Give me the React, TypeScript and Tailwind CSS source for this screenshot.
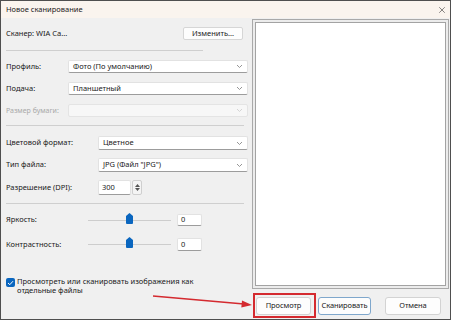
import { X } from 'lucide-react';

const font = { fontFamily: '"Noto Sans", "Open Sans", sans-serif' };

function Chevron({ light = false }: { light?: boolean }) {
  return (
    <svg width="7" height="5" viewBox="0 0 7 5" className="shrink-0">
      <path d="M1 1 L3.5 3.5 L6 1" fill="none" stroke={light ? '#cfcfcf' : '#8a8a8a'} strokeWidth="0.9" />
    </svg>
  );
}

function Select({ value, disabled = false, h = 'h-[13px]' }: { value?: string; disabled?: boolean; h?: string }) {
  return (
    <div
      className={`flex flex-1 items-center justify-between rounded-[2px] border pl-[4px] pr-[4px] ${h} ${
        disabled ? 'border-[#e4e4e4] bg-[#f7f7f7]' : 'border-[#e2e2e2] border-b-[#9c9c9c] bg-white'
      }`}
    >
      <span className="text-[7.5px] leading-none text-[#1a1a1a]">{value}</span>
      <Chevron light={disabled} />
    </div>
  );
}

function Row({ label, children, labelW, className }: { label: string; children: React.ReactNode; labelW: string; className: string }) {
  return (
    <div className={`flex items-center ${className}`}>
      <span className={`${labelW} shrink-0 text-[7.5px] leading-none text-[#1a1a1a]`}>{label}</span>
      {children}
    </div>
  );
}

function Slider({ label, className }: { label: string; className: string }) {
  return (
    <div className={`flex items-center ${className}`}>
      <span className="w-[82px] shrink-0 text-[7.5px] leading-none text-[#1a1a1a]">{label}</span>
      <div className="relative flex h-full w-[83px] items-center">
        <div className="h-px w-full bg-[#cdcdcd]" />
        <svg width="7" height="11" viewBox="0 0 7 11" className="absolute left-[38px] top-[-1px]">
          <path d="M0 3 L3.5 0 L7 3 V10 Q7 11 6 11 H1 Q0 11 0 10 Z" fill="#0a66bf" />
        </svg>
      </div>
      <div className="ml-[6px] flex h-full w-[25px] items-center rounded-[2px] border border-[#e2e2e2] border-b-[#9c9c9c] bg-white pl-[3px] text-[7.5px] leading-none text-[#1a1a1a]">
        0
      </div>
    </div>
  );
}

function Btn({ label, accent = false }: { label: string; accent?: boolean }) {
  return (
    <div
      className={`flex h-[18px] items-center justify-center rounded-[3px] border bg-[#fdfdfd] text-[7.5px] leading-none tracking-[-0.1px] text-[#1a1a1a] ${
        accent ? 'border-[#7fa7cc]' : 'border-[#d3d3d3]'
      }`}
    >
      {label}
    </div>
  );
}

export default function App() {
  return (
    <div className="relative flex h-[320px] w-[451px] flex-col overflow-hidden border border-[#4f4f4f] bg-[#f0f0f0]" style={font}>
      <div className="flex h-[17px] shrink-0 items-center justify-between bg-[#faf4ee] pl-[5px] pr-[3px]">
        <span className="text-[7.5px] leading-none text-[#1a1a1a]">Новое сканирование</span>
        <X size={10} strokeWidth={1.4} color="#333" />
      </div>

      <div className="flex flex-1">
        <div className="flex w-[250px] shrink-0 flex-col pl-[5px] pr-[3px]">
          <div className="mt-[9px] flex h-[13px] items-center justify-between">
            <span className="text-[7.5px] leading-none text-[#1a1a1a]">Сканер: WIA Ca...</span>
            <div className="mr-[5px] flex h-[13px] w-[60px] items-center justify-center rounded-[2px] border border-[#d6d6d6] bg-[#fdfdfd] text-[7.5px] leading-none text-[#1a1a1a]">
              Изменить...
            </div>
          </div>
          <div className="mt-[10px] h-px w-[197px] bg-[#cfcfcf]" />

          <Row label="Профиль:" labelW="w-[62px]" className="mt-[9px] h-[13px]">
            <Select value="Фото (По умолчанию)" />
          </Row>
          <Row label="Подача:" labelW="w-[62px]" className="mt-[9px] h-[13px]">
            <Select value="Планшетный" />
          </Row>
          <div className="mt-[9px] flex h-[13px] items-center">
            <span className="w-[62px] shrink-0 text-[7px] leading-none text-[#a8a8a8]">Размер бумаги:</span>
            <Select disabled />
          </div>
          <div className="mt-[8px] h-px w-[238px] bg-[#cfcfcf]" />

          <Row label="Цветовой формат:" labelW="w-[92px]" className="mt-[10px] h-[14px]">
            <Select value="Цветное" h="h-[14px]" />
          </Row>
          <Row label="Тип файла:" labelW="w-[92px]" className="mt-[8px] h-[14px]">
            <Select value='JPG (Файл "JPG")' h="h-[14px]" />
          </Row>
          <Row label="Разрешение (DPI):" labelW="w-[92px]" className="mt-[8px] h-[15px]">
            <div className="flex h-full w-[33px] items-center rounded-[2px] border border-[#e2e2e2] border-b-[#9c9c9c] bg-white pl-[3px] text-[7.5px] leading-none text-[#1a1a1a]">
              300
            </div>
            <div className="ml-px flex h-full w-[10px] flex-col items-center justify-center gap-px rounded-[2px] border border-[#cfcfcf] bg-[#f4f4f4]">
              <svg width="5" height="3" viewBox="0 0 5 3"><path d="M0 3 L2.5 0 L5 3 Z" fill="#555" /></svg>
              <svg width="5" height="3" viewBox="0 0 5 3"><path d="M0 0 L2.5 3 L5 0 Z" fill="#555" /></svg>
            </div>
          </Row>
          <div className="mt-[8px] h-px w-[238px] bg-[#cfcfcf]" />

          <Slider label="Яркость:" className="mt-[10px] h-[12px]" />
          <Slider label="Контрастность:" className="mt-[12px] h-[13px]" />

          <div className="mt-[26px] flex items-start gap-[2px]">
            <div className="mt-[1px] flex h-[9px] w-[9px] shrink-0 items-center justify-center rounded-[2px] bg-[#0a66bf]">
              <svg width="7" height="6" viewBox="0 0 7 6">
                <path d="M1 3 L2.8 4.7 L6 1.2" fill="none" stroke="white" strokeWidth="1" />
              </svg>
            </div>
            <span className="w-[190px] text-[7.5px] leading-[9px] text-[#1a1a1a]">
              Просмотреть или сканировать изображения как
              <br />
              отдельные файлы
            </span>
          </div>
        </div>

        <div className="flex flex-1 flex-col pr-[1px]">
          <div className="ml-[1px] mt-px h-[270px] border border-[#a9a9a9] bg-[#ececec] p-[2px]">
            <div className="h-full border border-[#a3a3a3] bg-white" />
          </div>
          <div className="mt-[8px] flex gap-[6px] pl-[5px]">
            <div className="w-[55px]"><Btn label="Просмотр" /></div>
            <div className="ml-[1px] w-[53px]"><Btn label="Сканировать" accent /></div>
            <div className="ml-[8px] w-[56px]"><Btn label="Отмена" /></div>
          </div>
        </div>
      </div>

      <div className="pointer-events-none absolute left-[252px] top-[292px] h-[25px] w-[63px] border-2 border-[#d42a2f]" />
      <svg className="pointer-events-none absolute left-0 top-0" width="451" height="320">
        <line x1="152" y1="295" x2="243" y2="303" stroke="#d42a2f" strokeWidth="1.6" />
        <path d="M251 304 L241 299.5 L240.3 306.5 Z" fill="#d42a2f" />
      </svg>
    </div>
  );
}
